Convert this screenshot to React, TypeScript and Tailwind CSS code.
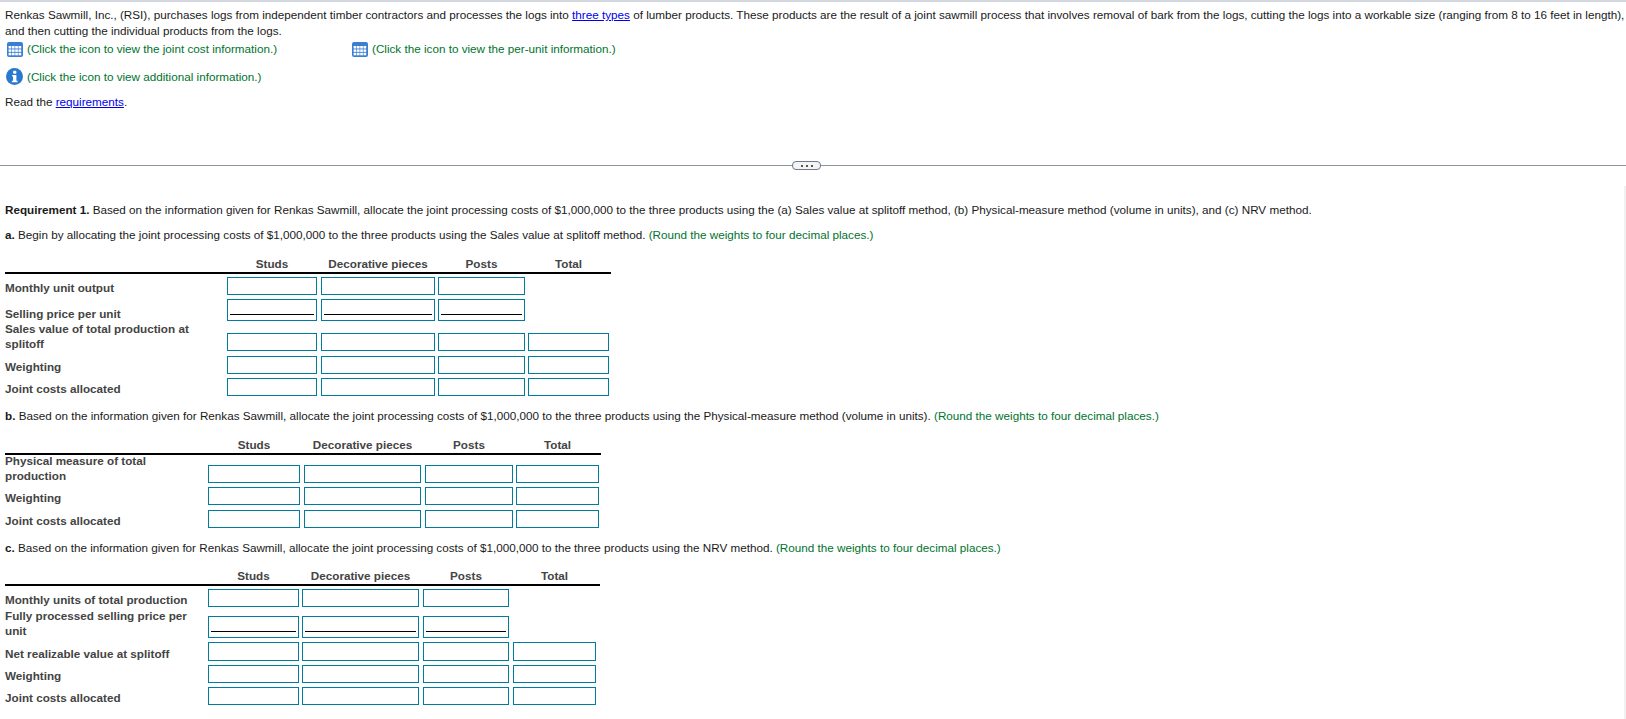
import React from 'react';

const GridIcon: React.FC = () => (
    <svg width="16" height="15" viewBox="0 0 16 15" className="shrink-0">
        <rect x="0" y="0" width="16" height="15" rx="2" fill="#3b7fd4" />
        {[1.6, 4.9, 8.2, 11.5].map((x) =>
            [4, 7.4, 10.8].map((y) => <rect key={`${x}-${y}`} x={x} y={y} width="2.7" height="2.5" fill="#ffffff" />)
        )}
    </svg>
);

const InfoIcon: React.FC = () => (
    <svg width="17" height="17" viewBox="0 0 18 18" className="shrink-0">
        <circle cx="9" cy="9" r="9" fill="#2b78d0" />
        <rect x="7.5" y="3" width="3.5" height="3" rx="1" fill="#ffffff" />
        <path d="M6.5 7.5h4.5v6h1.2v1.5H6.2v-1.5h1.3V9H6.5z" fill="#ffffff" />
    </svg>
);

type Row = { label: string; cells: number; height: string; gap: string; underline?: boolean; labelClass?: string };

const DataTable: React.FC<{ widths: string[]; headers: string[]; labelClass: string; rows: Row[]; ruleClass: string }> = ({ widths, headers, labelClass, rows, ruleClass }) => (
    <div className={ruleClass}>
        <div className="flex h-[18px] items-center border-b-2 border-black font-bold text-[#444444]">
            <div className={labelClass} />
            {headers.map((h, i) => (
                <div key={h} className={`${widths[i]} text-center`}>{h}</div>
            ))}
        </div>
        {rows.map((row) => (
            <div key={row.label} className={`flex items-end ${row.gap}`}>
                <div className={`${labelClass} leading-[14.5px] font-bold text-[#444444] ${row.labelClass ?? ''}`}>{row.label}</div>
                {widths.slice(0, row.cells).map((w, i) => (
                    <div key={i} className={`${w} ${row.height} border border-[#007c9e] bg-white px-[2px] flex flex-col justify-end pb-[5px]`}>
                        {row.underline && <div className="h-px bg-black" />}
                    </div>
                ))}
            </div>
        ))}
    </div>
);

const widthsA = ['w-[90px] mr-[4px]', 'w-[114px] mr-[3px]', 'w-[87px] mr-[3px]', 'w-[81px]'];
const widthsB = ['w-[92px] mr-[4px]', 'w-[117px] mr-[4px]', 'w-[88px] mr-[3px]', 'w-[83px]'];
const widthsC = ['w-[91px] mr-[3px]', 'w-[117px] mr-[4px]', 'w-[86px] mr-[4px]', 'w-[83px]'];
const headers = ['Studs', 'Decorative pieces', 'Posts', 'Total'];

const App: React.FC = () => {
    return (
        <div className="relative h-[719px] w-[1626px] overflow-hidden bg-white text-[11.7px] leading-[16px] text-[#1a1a1a] font-['Liberation_Sans',Arial,sans-serif]">
            <div className="h-[2px] bg-[#d3d7e0]" />
            <div className="pl-[5px] pt-[5px]">
                <div className="whitespace-nowrap">
                    Renkas Sawmill, Inc., (RSI), purchases logs from independent timber contractors and processes the logs into <a className="text-[#0000ee] underline">three types</a> of lumber products. These products are the result of a joint sawmill process that involves removal of bark from the logs, cutting the logs into a workable size (ranging from 8 to 16 feet in length),
                </div>
                <div>and then cutting the individual products from the logs.</div>
                <div className="mt-[2px] flex items-center text-[#00732e]">
                    <div className="flex w-[347px] items-center gap-[4px] pl-[2px]"><GridIcon /><span>(Click the icon to view the joint cost information.)</span></div>
                    <div className="flex items-center gap-[4px]"><GridIcon /><span>(Click the icon to view the per-unit information.)</span></div>
                </div>
                <div className="mt-[11px] flex items-center gap-[4px] pl-[1px] text-[#00732e]"><InfoIcon /><span>(Click the icon to view additional information.)</span></div>
                <div className="mt-[9px]">Read the <a className="text-[#0000ee] underline">requirements</a>.</div>
            </div>
            <div className="relative mt-[55px] h-px bg-[#8a939f]">
                <div className="absolute left-[792px] top-[-4px] flex h-[9px] w-[29px] items-center justify-center gap-[3px] rounded-[4px] border border-[#6d7a8c] bg-[#f4f4f4]">
                    <span className="h-[2px] w-[2px] bg-[#555555]" />
                    <span className="h-[2px] w-[2px] bg-[#555555]" />
                    <span className="h-[2px] w-[2px] bg-[#555555]" />
                </div>
            </div>
            <div className="absolute bottom-0 right-0 top-[186px] w-[2px] bg-[#f1f1f1]" />
            <div className="pl-[5px]">
                <div className="mt-[36px]"><b>Requirement 1.</b> Based on the information given for Renkas Sawmill, allocate the joint processing costs of $1,000,000 to the three products using the (a) Sales value at splitoff method, (b) Physical-measure method (volume in units), and (c) NRV method.</div>
                <div className="mt-[9px]"><b>a.</b> Begin by allocating the joint processing costs of $1,000,000 to the three products using the Sales value at splitoff method. <span className="text-[#00732e]">(Round the weights to four decimal places.)</span></div>
                <DataTable
                    ruleClass="mt-[13px] w-[606px]"
                    labelClass="w-[222px] shrink-0"
                    widths={widthsA}
                    headers={headers}
                    rows={[
                        { label: 'Monthly unit output', cells: 3, height: 'h-[18px]', gap: 'mt-[3px]' },
                        { label: 'Selling price per unit', cells: 3, height: 'h-[22px]', gap: 'mt-[4px]', underline: true },
                        { label: 'Sales value of total production at splitoff', cells: 4, height: 'h-[18px]', gap: 'mt-[1px]', labelClass: 'pr-[30px]' },
                        { label: 'Weighting', cells: 4, height: 'h-[18px]', gap: 'mt-[5px]' },
                        { label: 'Joint costs allocated', cells: 4, height: 'h-[18px]', gap: 'mt-[4px]' },
                    ]}
                />
                <div className="mt-[12px]"><b>b.</b> Based on the information given for Renkas Sawmill, allocate the joint processing costs of $1,000,000 to the three products using the Physical-measure method (volume in units). <span className="text-[#00732e]">(Round the weights to four decimal places.)</span></div>
                <DataTable
                    ruleClass="mt-[13px] w-[596px]"
                    labelClass="w-[203px] shrink-0"
                    widths={widthsB}
                    headers={headers}
                    rows={[
                        { label: 'Physical measure of total production', cells: 4, height: 'h-[18px]', gap: '-mt-px', labelClass: 'pr-[50px]' },
                        { label: 'Weighting', cells: 4, height: 'h-[18px]', gap: 'mt-[4px]' },
                        { label: 'Joint costs allocated', cells: 4, height: 'h-[18px]', gap: 'mt-[5px]' },
                    ]}
                />
                <div className="mt-[12px]"><b>c.</b> Based on the information given for Renkas Sawmill, allocate the joint processing costs of $1,000,000 to the three products using the NRV method. <span className="text-[#00732e]">(Round the weights to four decimal places.)</span></div>
                <DataTable
                    ruleClass="mt-[12px] w-[595px]"
                    labelClass="w-[203px] shrink-0"
                    widths={widthsC}
                    headers={headers}
                    rows={[
                        { label: 'Monthly units of total production', cells: 3, height: 'h-[18px]', gap: 'mt-[3px]' },
                        { label: 'Fully processed selling price per unit', cells: 3, height: 'h-[22px]', gap: 'mt-[2px]', underline: true, labelClass: 'pr-[10px]' },
                        { label: 'Net realizable value at splitoff', cells: 4, height: 'h-[19px]', gap: 'mt-[4px]' },
                        { label: 'Weighting', cells: 4, height: 'h-[18px]', gap: 'mt-[4px]' },
                        { label: 'Joint costs allocated', cells: 4, height: 'h-[18px]', gap: 'mt-[4px]' },
                    ]}
                />
            </div>
        </div>
    );
};

export default App;
